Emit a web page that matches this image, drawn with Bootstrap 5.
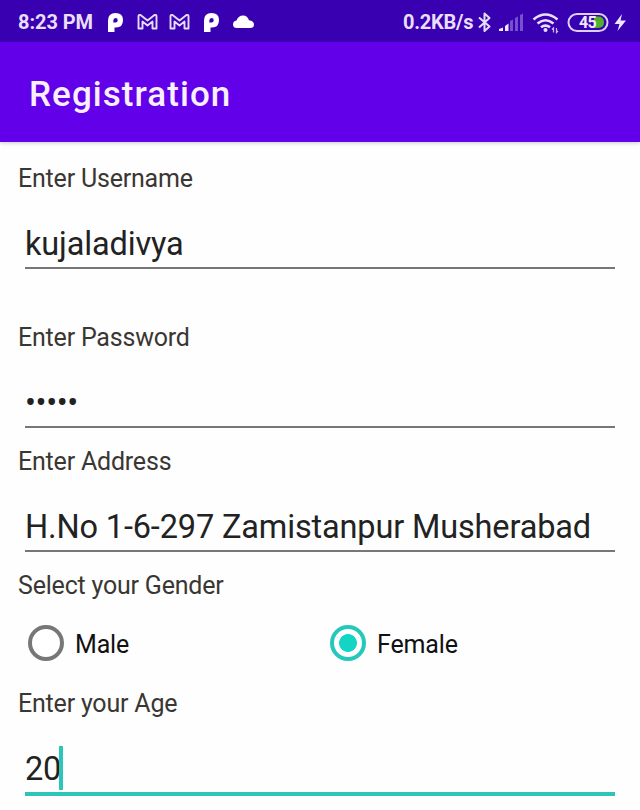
<!DOCTYPE html>
<html lang="en">
<head>
<meta charset="utf-8">
<meta name="viewport" content="width=device-width, initial-scale=1">
<title>Registration</title>
<link href="https://cdn.jsdelivr.net/npm/bootstrap@5.3.0/dist/css/bootstrap.min.css" rel="stylesheet">
<style>
  body { font-family: Roboto, "Liberation Sans", sans-serif; height: 810px; overflow: hidden; background: #fefefe; }
  .status-strip { height: 42px; background: #3900b1; color: #e9defb; font-size: 20px; font-weight: 700; line-height: 24px; padding: 2px 12px 0 18px; }
  .status-strip svg { display: block; flex: none; }
  .clock { width: 78px; letter-spacing: -.05px; }
  .rate { width: 72px; letter-spacing: -.25px; }
  .title-bar { height: 100px; background: #6200ea; padding: 6px 29px 0; box-shadow: 0 1px 4px rgba(60, 30, 120, .25); }
  .title-bar h1 { font-size: 35px; font-weight: 500; letter-spacing: 1.05px; line-height: 42px; color: #f8efff; }
  .reg-form { padding: 22px 25px 0 18px; }
  .form-label { display: block; font-size: 25px; line-height: 30px; letter-spacing: -.2px; color: #3a3733; margin: 0; }
  .line-input, .line-input:focus { display: flex; margin: 30px 0 0 7px; width: 590px; height: 45px; padding: 0 0 3px; border: 0; border-bottom: 2px solid #777; border-radius: 0; background: none; box-shadow: none; font-size: 32.5px; line-height: 40px; letter-spacing: -.15px; color: #222; }
  .line-input[type="password"] { letter-spacing: -.4px; }
  .field-gap-lg { margin-bottom: 54px; }
  .field-gap { margin-bottom: 19px; }
  .line-input.is-active { height: 47px; border-bottom: 4px solid #2cc5b8; }
  .text-caret { width: 4px; height: 44px; background: #2cc5b8; margin-top: -3px; margin-left: -2px; }
  .gender-row { height: 88px; padding-left: 10px; }
  .gender-row .form-check { flex: none; width: 302px; gap: 11px; font-size: 25px; line-height: 30px; letter-spacing: -.15px; color: #111; }
  .form-check .form-check-input { width: 36px; height: 36px; margin: 0 0 4px; border: 4px solid #777; background: #fff; box-shadow: none; }
  .form-check .form-check-input:checked { border-color: #24c9ba; background: radial-gradient(circle, #12d5c3 0 8.5px, #fff 9.3px); }
</style>
<script src="https://cdn.jsdelivr.net/npm/bootstrap@5.3.0/dist/js/bootstrap.bundle.min.js"></script>
</head>
<body>
<header>
  <div class="status-strip d-flex align-items-center">
    <span class="clock text-nowrap">8:23 PM</span>
    <svg class="ms-2" width="150" height="24" viewBox="104 9 150 24" fill="none">
      <g id="p-badge" fill="#fff"><path fill-rule="evenodd" d="M108 31V19.500Q108 12 115.500 12Q123 12 123 19Q123 26.500 116 26.500H114.500V31ZM115.700 17Q113.300 17 113.300 19.500V21.500H115.500Q117.700 21.500 117.700 19.200Q117.700 17 115.700 17Z"/></g>
      <g id="mail" stroke="#e6dcfa" stroke-width="1.900" stroke-linejoin="round"><path d="M138.500 27.500V15.500Q138.500 13.500 140.500 14L147.500 19.500L154.500 14Q156.500 13.500 156.500 15.500V27.500H152.500V20.500L147.500 24.500L142.500 20.500V27.500Z"/></g>
      <use href="#mail" x="32"/>
      <use href="#p-badge" x="96"/>
      <path fill="#fff" d="M237 27Q233 27 233 23.500Q233 20 236.500 19.500Q238.500 14.500 243 14.500Q247.500 14.500 249 19.300Q254 20 254 23.500Q254 27 250 27Z"/>
    </svg>
    <span class="rate ms-auto text-nowrap">0.2KB/s</span>
    <svg width="153" height="26" viewBox="475 8 153 26" fill="none">
      <path d="M479 16.500L489.500 25.500L484.500 30V12.500L489.500 17L479 26.500" stroke="#e6dcfa" stroke-width="2" stroke-linejoin="round"/>
      <path d="M499 30V28L503 26.500V30ZM505 30V25L508.500 22.500V30Z" fill="#eee6ff"/>
      <path d="M510 30V20L513 18.500V30ZM515 30V17L518 15.500V30ZM520 30V14L523 12.500V30Z" fill="#7650cf"/>
      <path d="M533.500 18.500Q545.500 8.500 557.500 18.500M537.500 22.500Q545.500 16 553.500 22.500M541 26.300Q545.500 22.800 550 26.300" stroke="#e9e0ff" stroke-width="2.600"/>
      <circle cx="545.500" cy="29" r="2" fill="#e9e0ff"/>
      <path d="M553.500 31.500V27L552 28.500M556.500 27V31.500L558 30" stroke="#cbb9f4" stroke-width="1.200"/>
      <path d="M594 15.500H598Q604 15.500 604 21.300Q604 27 598 27H594Z" fill="#4fb02c"/>
      <rect x="568.500" y="13" width="39" height="17" rx="8.500" stroke="#ddd0f8" stroke-width="2"/>
      <text x="579" y="27" font-family="Roboto, sans-serif" font-size="16" font-weight="700" letter-spacing="-.6" fill="#f1eaff">45</text>
      <path d="M622 13L614.500 23H619.500L617.500 30L626 19.500H620.500Z" fill="#eee6ff"/>
    </svg>
  </div>
  <div class="title-bar d-flex align-items-center"><h1 class="m-0">Registration</h1></div>
</header>
<form class="reg-form">
  <div class="field-gap-lg">
    <label class="form-label" for="username">Enter Username</label>
    <input class="form-control line-input" id="username" type="text" value="kujaladivya" spellcheck="false">
  </div>
  <div class="field-gap">
    <label class="form-label" for="pass">Enter Password</label>
    <input class="form-control line-input" id="pass" type="password" value="12345">
  </div>
  <div class="field-gap">
    <label class="form-label" for="address">Enter Address</label>
    <input class="form-control line-input" id="address" type="text" value="H.No 1-6-297 Zamistanpur Musherabad" spellcheck="false">
  </div>
  <span class="form-label">Select your Gender</span>
  <div class="gender-row d-flex align-items-center">
    <label class="form-check d-flex align-items-center p-0 m-0"><input class="form-check-input float-none" type="radio" name="gender">Male</label>
    <label class="form-check d-flex align-items-center p-0 m-0"><input class="form-check-input float-none" type="radio" name="gender" checked>Female</label>
  </div>
  <span class="form-label">Enter your Age</span>
  <div class="line-input is-active"><span>20</span><span class="text-caret"></span></div>
</form>
</body>
</html>
